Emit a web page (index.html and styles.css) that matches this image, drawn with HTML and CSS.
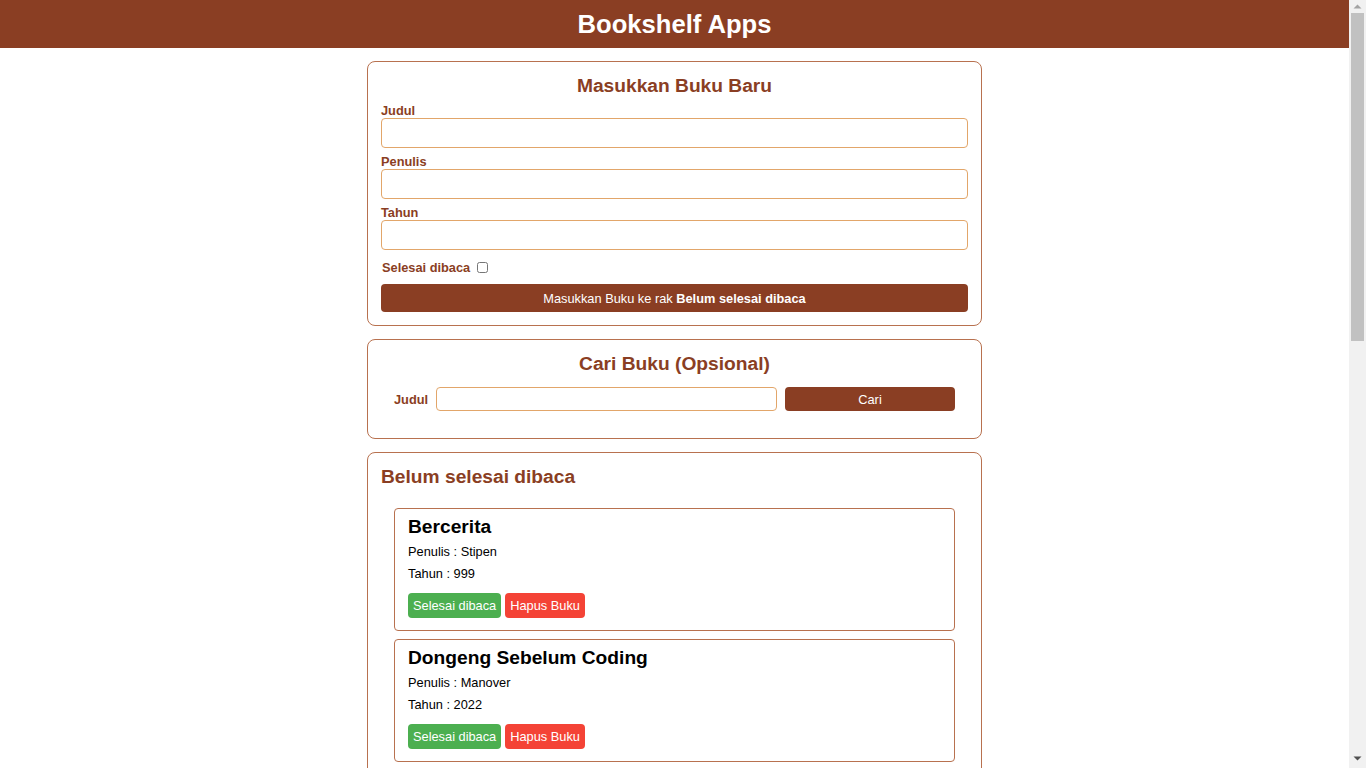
FILE: index.html
```html
<!DOCTYPE html>
<html lang="id">
<head>
<meta charset="utf-8">
<title>Bookshelf Apps</title>
<link rel="stylesheet" href="styles.css">
</head>
<body>
<header class="head-bar">
  <h1 class="head-title">Bookshelf Apps</h1>
</header>
<main class="main">
  <section class="card">
    <h2 class="card-title center">Masukkan Buku Baru</h2>
    <form class="input-form">
      <div class="field">
        <label class="field-label" for="inputBookTitle">Judul</label>
        <input class="field-input" id="inputBookTitle" type="text">
      </div>
      <div class="field">
        <label class="field-label" for="inputBookAuthor">Penulis</label>
        <input class="field-input" id="inputBookAuthor" type="text">
      </div>
      <div class="field">
        <label class="field-label" for="inputBookYear">Tahun</label>
        <input class="field-input" id="inputBookYear" type="number">
      </div>
      <div class="check-row">
        <label class="field-label" for="inputBookIsComplete">Selesai dibaca</label>
        <input class="check" id="inputBookIsComplete" type="checkbox">
      </div>
      <button class="submit-btn" type="button">Masukkan Buku ke rak <b>Belum selesai dibaca</b></button>
    </form>
  </section>

  <section class="card">
    <h2 class="card-title center">Cari Buku (Opsional)</h2>
    <form class="search-form">
      <label class="field-label" for="searchBookTitle">Judul</label>
      <input class="search-input" id="searchBookTitle" type="text">
      <button class="search-btn" type="button">Cari</button>
    </form>
  </section>

  <section class="card">
    <h2 class="card-title">Belum selesai dibaca</h2>
    <div class="book-list">
      <article class="book">
        <h3 class="book-title">Bercerita</h3>
        <p class="book-meta">Penulis : Stipen</p>
        <p class="book-meta">Tahun : 999</p>
        <div class="actions"><button class="btn green" type="button">Selesai dibaca</button><button class="btn red" type="button">Hapus Buku</button></div>
      </article>
      <article class="book">
        <h3 class="book-title">Dongeng Sebelum Coding</h3>
        <p class="book-meta">Penulis : Manover</p>
        <p class="book-meta">Tahun : 2022</p>
        <div class="actions"><button class="btn green" type="button">Selesai dibaca</button><button class="btn red" type="button">Hapus Buku</button></div>
      </article>
      <article class="book">
        <h3 class="book-title">Laskar Pelangi</h3>
        <p class="book-meta">Penulis : Andrea Hirata</p>
        <p class="book-meta">Tahun : 2005</p>
        <div class="actions"><button class="btn green" type="button">Selesai dibaca</button><button class="btn red" type="button">Hapus Buku</button></div>
      </article>
      <article class="book">
        <h3 class="book-title">Bumi Manusia</h3>
        <p class="book-meta">Penulis : Pramoedya</p>
        <p class="book-meta">Tahun : 1980</p>
        <div class="actions"><button class="btn green" type="button">Selesai dibaca</button><button class="btn red" type="button">Hapus Buku</button></div>
      </article>
    </div>
  </section>

  <section class="card">
    <h2 class="card-title">Selesai dibaca</h2>
    <div class="book-list">
      <article class="book">
        <h3 class="book-title">Negeri 5 Menara</h3>
        <p class="book-meta">Penulis : Ahmad Fuadi</p>
        <p class="book-meta">Tahun : 2009</p>
        <div class="actions"><button class="btn green" type="button">Belum selesai dibaca</button><button class="btn red" type="button">Hapus Buku</button></div>
      </article>
      <article class="book">
        <h3 class="book-title">Ayat-Ayat Cinta</h3>
        <p class="book-meta">Penulis : Habiburrahman</p>
        <p class="book-meta">Tahun : 2004</p>
        <div class="actions"><button class="btn green" type="button">Belum selesai dibaca</button><button class="btn red" type="button">Hapus Buku</button></div>
      </article>
      <article class="book">
        <h3 class="book-title">Sang Pemimpi</h3>
        <p class="book-meta">Penulis : Andrea Hirata</p>
        <p class="book-meta">Tahun : 2006</p>
        <div class="actions"><button class="btn green" type="button">Belum selesai dibaca</button><button class="btn red" type="button">Hapus Buku</button></div>
      </article>
      <article class="book">
        <h3 class="book-title">Perahu Kertas</h3>
        <p class="book-meta">Penulis : Dee Lestari</p>
        <p class="book-meta">Tahun : 2009</p>
        <div class="actions"><button class="btn green" type="button">Belum selesai dibaca</button><button class="btn red" type="button">Hapus Buku</button></div>
      </article>
    </div>
  </section>
</main>

<div class="scrollbar" aria-hidden="true">
  <svg class="arrow" width="17" height="12" viewBox="0 0 17 12"><polygon points="4.5,8.5 8.5,4.5 12.5,8.5" fill="#a3a3a3"/></svg>
  <div class="thumb"></div>
  <div class="track-rest"></div>
  <svg class="arrow" width="17" height="17" viewBox="0 0 17 17"><polygon points="4.5,5.5 12.5,5.5 8.5,9.5" fill="#505050"/></svg>
</div>
</body>
</html>
```

FILE: styles.css
```css
* {
  box-sizing: border-box;
}

body {
  margin: 0;
  padding-right: 17px;
  font-family: "Liberation Sans", Arial, sans-serif;
  background: #ffffff;
  color: #000000;
}

.scrollbar {
  position: fixed;
  top: 0;
  right: 0;
  width: 17px;
  height: 100vh;
  background: #f1f1f1;
  display: flex;
  flex-direction: column;
}

.arrow {
  display: block;
  flex: none;
}

.thumb {
  flex: none;
  height: 328px;
  margin: 1px 2px 0;
  background: #c1c1c1;
}

.track-rest {
  flex: 1;
}

.head-bar {
  background: #8a3e23;
  height: 48px;
}

.head-title {
  margin: 0;
  text-align: center;
  color: #ffffff;
  font-size: 25.6px;
  line-height: 48px;
  font-weight: bold;
}

.main {
  width: 615px;
  margin: 13px auto 70px;
  display: flex;
  flex-direction: column;
  gap: 13px;
}

.card {
  border: 1px solid #b8714f;
  border-radius: 8px;
  padding: 13px;
}

.card-title {
  margin: 0;
  color: #8a3e23;
  font-size: 19.2px;
  line-height: 22px;
  font-weight: bold;
}

.center {
  text-align: center;
}

.input-form {
  display: flex;
  flex-direction: column;
  margin-top: 6px;
}

.field {
  display: flex;
  flex-direction: column;
}

.field + .field {
  margin-top: 6px;
}

.field-label {
  color: #8a3e23;
  font-size: 12.8px;
  line-height: 15px;
  font-weight: bold;
}

.field-input {
  height: 30px;
  border: 1px solid #e2a66a;
  border-radius: 4px;
  padding: 0 6px;
  font-family: inherit;
  outline: none;
}

.check-row {
  display: flex;
  align-items: center;
  gap: 7px;
  margin-top: 9px;
  height: 16px;
  padding-left: 1px;
}

.check {
  margin: 0;
  width: 11px;
  height: 11px;
}

.submit-btn {
  margin-top: 9px;
  height: 28px;
  border: none;
  border-radius: 4px;
  background: #8a3e23;
  color: #ffffff;
  font-family: inherit;
  font-size: 12.8px;
}

.search-form {
  display: flex;
  align-items: center;
  gap: 8px;
  margin-top: 12px;
  padding: 0 13px 14px;
}

.search-input {
  flex: 1;
  height: 24px;
  border: 1px solid #e2a66a;
  border-radius: 4px;
  padding: 0 6px;
  font-family: inherit;
  outline: none;
}

.search-btn {
  width: 170px;
  height: 24px;
  border: none;
  border-radius: 4px;
  background: #8a3e23;
  color: #ffffff;
  font-family: inherit;
  font-size: 12.8px;
}

.book-list {
  display: flex;
  flex-direction: column;
  gap: 8px;
  margin: 20px 13px 0;
}

.book {
  border: 1px solid #b8714f;
  border-radius: 4px;
  padding: 6px 13px 12px;
}

.book-title {
  margin: 0;
  font-size: 19.2px;
  line-height: 23px;
  font-weight: bold;
  color: #000000;
}

.book-meta {
  margin: 6px 0 0;
  font-size: 12.8px;
  line-height: 16px;
}

.actions {
  display: flex;
  gap: 4px;
  margin-top: 11px;
}

.btn {
  height: 25px;
  padding: 0 5px;
  border: none;
  border-radius: 4px;
  color: #ffffff;
  font-family: inherit;
  font-size: 12.8px;
}

.green {
  background: #4caf50;
}

.red {
  background: #f44336;
}
```
